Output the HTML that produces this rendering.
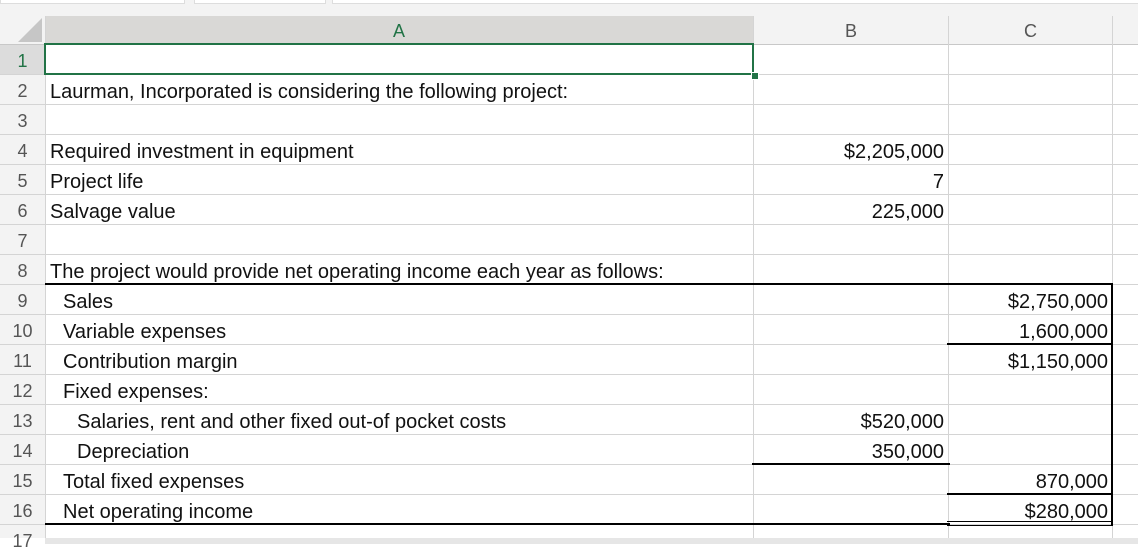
<!DOCTYPE html>
<html><head><style>
body{margin:0;width:1138px;height:544px;overflow:hidden;background:#fff;position:relative;font-family:"Liberation Sans",sans-serif;}
.a{position:absolute}
.t{position:absolute;font-size:20px;color:#111;white-space:nowrap;line-height:22px;margin-top:1px}
.r{text-align:right}
.rn{position:absolute;left:0;width:45px;text-align:center;font-size:18px;color:#555;line-height:22px}
.h{position:absolute;height:1px;background:#d4d4d4;left:0;width:1138px}
.v{position:absolute;width:1px;background:#d4d4d4;top:16px;height:522px}
.k{position:absolute;background:#000}
</style></head><body>
<div class="a" style="left:0;top:0;width:1138px;height:16px;background:#f3f3f3"></div>
<div class="a" style="left:0;top:0;width:183px;height:3px;background:#fff;border:1px solid #ddd;border-top:none"></div>
<div class="a" style="left:194px;top:0;width:130px;height:3px;background:#fff;border:1px solid #ddd;border-top:none"></div>
<div class="a" style="left:332px;top:0;width:806px;height:3px;background:#fff;border:1px solid #ddd;border-top:none"></div>
<div class="a" style="left:0;top:16px;width:1138px;height:28px;background:#f3f3f3"></div>
<div class="a" style="left:45px;top:16px;width:708px;height:28px;background:#d9d8d6"></div>
<div class="a" style="left:0;top:44px;width:45px;height:494px;background:#f3f3f3"></div>
<div class="a" style="left:0;top:44px;width:45px;height:30px;background:#dcdcdc"></div>
<svg class="a" style="left:18px;top:18px" width="25" height="25"><polygon points="24,0 24,24 0,24" fill="#c6c6c6"/></svg>
<div class="t" style="left:393px;top:19px;color:#217346;font-size:18px">A</div>
<div class="t" style="left:845px;top:19px;color:#555;font-size:18px">B</div>
<div class="t" style="left:1024px;top:19px;color:#555;font-size:18px">C</div>
<div class="h" style="top:44px;background:#c8c8c8"></div>
<div class="h" style="top:74px"></div><div class="h" style="top:104px"></div><div class="h" style="top:134px"></div>
<div class="h" style="top:164px"></div><div class="h" style="top:194px"></div><div class="h" style="top:224px"></div>
<div class="h" style="top:254px"></div><div class="h" style="top:284px"></div><div class="h" style="top:314px"></div>
<div class="h" style="top:344px"></div><div class="h" style="top:374px"></div><div class="h" style="top:404px"></div>
<div class="h" style="top:434px"></div><div class="h" style="top:464px"></div><div class="h" style="top:494px"></div>
<div class="h" style="top:524px"></div>
<div class="v" style="left:45px"></div><div class="v" style="left:753px"></div><div class="v" style="left:948px"></div><div class="v" style="left:1112px"></div>
<div class="a" style="left:45px;top:538px;width:1093px;height:6px;background:#e6e6e6"></div>
<div class="rn" style="top:50px;color:#217346">1</div>
<div class="rn" style="top:80px">2</div><div class="rn" style="top:110px">3</div><div class="rn" style="top:140px">4</div>
<div class="rn" style="top:170px">5</div><div class="rn" style="top:200px">6</div><div class="rn" style="top:230px">7</div>
<div class="rn" style="top:260px">8</div><div class="rn" style="top:290px">9</div><div class="rn" style="top:320px">10</div>
<div class="rn" style="top:350px">11</div><div class="rn" style="top:380px">12</div><div class="rn" style="top:410px">13</div>
<div class="rn" style="top:440px">14</div><div class="rn" style="top:470px">15</div><div class="rn" style="top:500px">16</div>
<div class="rn" style="top:530px">17</div>
<div class="a" style="left:44px;top:43px;width:706px;height:28px;border:2px solid #217346"></div>
<div class="a" style="left:751px;top:72px;width:6px;height:6px;background:#217346;border:1px solid #fff"></div>
<div class="t" style="left:50px;top:80px">Laurman, Incorporated is considering the following project:</div>
<div class="t" style="left:50px;top:140px">Required investment in equipment</div>
<div class="t" style="left:50px;top:170px">Project life</div>
<div class="t" style="left:50px;top:200px">Salvage value</div>
<div class="t" style="left:50px;top:260px">The project would provide net operating income each year as follows:</div>
<div class="t" style="left:63px;top:290px">Sales</div>
<div class="t" style="left:63px;top:320px">Variable expenses</div>
<div class="t" style="left:63px;top:350px">Contribution margin</div>
<div class="t" style="left:63px;top:380px">Fixed expenses:</div>
<div class="t" style="left:77px;top:410px">Salaries, rent and other fixed out-of pocket costs</div>
<div class="t" style="left:77px;top:440px">Depreciation</div>
<div class="t" style="left:63px;top:470px">Total fixed expenses</div>
<div class="t" style="left:63px;top:500px">Net operating income</div>
<div class="t r" style="right:194px;top:140px">$2,205,000</div>
<div class="t r" style="right:194px;top:170px">7</div>
<div class="t r" style="right:194px;top:200px">225,000</div>
<div class="t r" style="right:194px;top:410px">$520,000</div>
<div class="t r" style="right:194px;top:440px">350,000</div>
<div class="t r" style="right:30px;top:290px">$2,750,000</div>
<div class="t r" style="right:30px;top:320px">1,600,000</div>
<div class="t r" style="right:30px;top:350px">$1,150,000</div>
<div class="t r" style="right:30px;top:470px">870,000</div>
<div class="t r" style="right:30px;top:500px">$280,000</div>
<div class="k" style="left:45px;top:283px;width:1068px;height:2px"></div>
<div class="k" style="left:1111px;top:283px;width:2px;height:243px"></div>
<div class="k" style="left:947px;top:343px;width:166px;height:2px"></div>
<div class="k" style="left:752px;top:463px;width:198px;height:2px"></div>
<div class="k" style="left:947px;top:493px;width:166px;height:2px"></div>
<div class="k" style="left:45px;top:523px;width:905px;height:2px"></div>
<div class="k" style="left:947px;top:521px;width:166px;height:1px"></div>
<div class="k" style="left:947px;top:525px;width:166px;height:1px"></div>
</body></html>
